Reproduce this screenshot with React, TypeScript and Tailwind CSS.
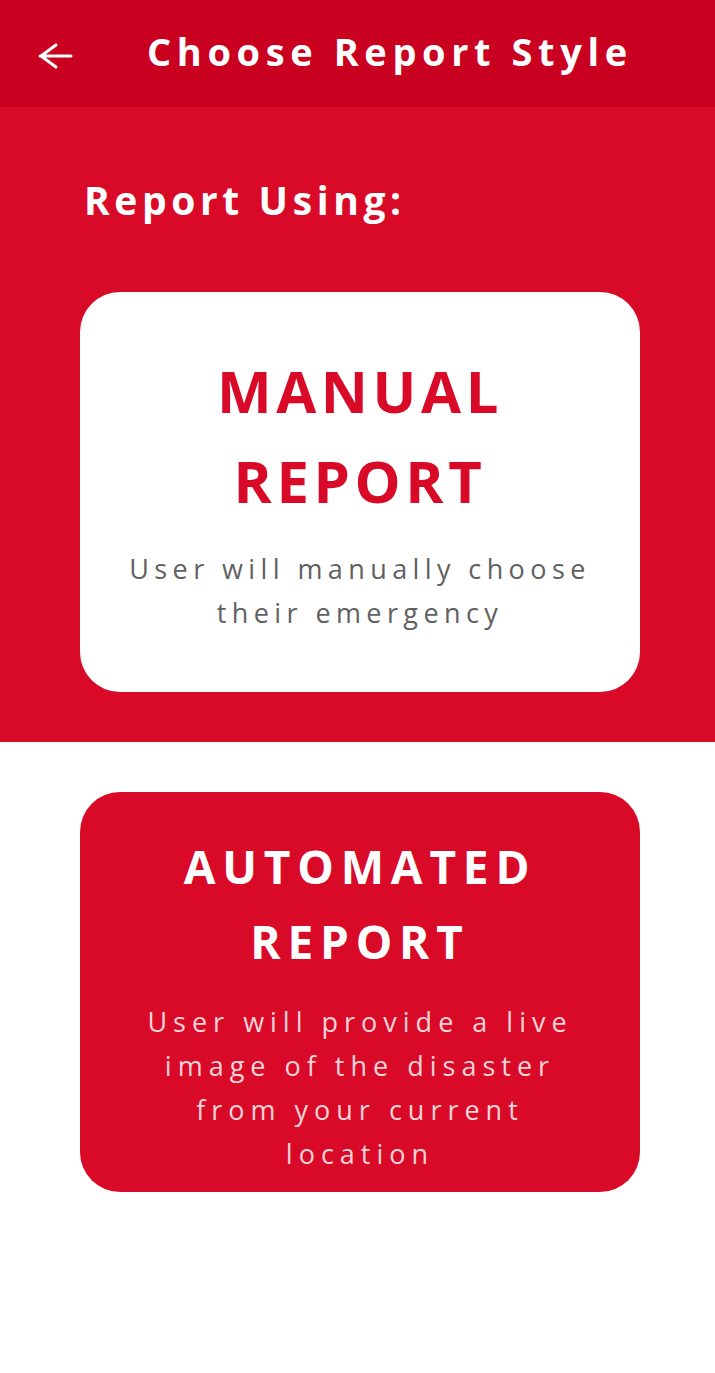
import React from "react";

const font = { fontFamily: '"Open Sans", "Liberation Sans", sans-serif' };

export default function App() {
  return (
    <div className="min-h-[1373px] w-[715px] bg-white" style={font}>
      <header className="flex h-[107px] items-center bg-[#C9001F] pl-[37px]">
        <svg width="36" height="28" viewBox="0 0 36 28" fill="none" className="mt-[5px]">
          <path d="M3 14H34M19 3L4 14l15 11" stroke="white" strokeWidth="3" strokeLinecap="round" strokeLinejoin="round" />
        </svg>
        <h1 className="mb-[6px] ml-[74px] text-[38px] font-bold leading-[48px] tracking-[5.6px] text-white">
          Choose Report Style
        </h1>
      </header>

      <section className="bg-[#D90A27] pb-[50px] pt-[69px]">
        <h2 className="pl-[84px] text-[39px] font-bold leading-[48px] tracking-[4.6px] text-white">
          Report Using:
        </h2>
        <div className="ml-[80px] mt-[68px] flex h-[400px] w-[560px] flex-col items-center rounded-[40px] bg-white pt-[54px] text-center">
          <div className="text-[58px] font-bold leading-[90px] tracking-[4.6px] text-[#D90A27]">
            <div>MANUAL</div>
            <div>REPORT</div>
          </div>
          <div className="mt-[21px] text-[27px] leading-[44px] tracking-[5.4px] text-[#616161]">
            <div>User will manually choose</div>
            <div>their emergency</div>
          </div>
        </div>
      </section>

      <div className="ml-[80px] mt-[50px] flex h-[400px] w-[560px] flex-col items-center rounded-[40px] bg-[#D90A27] pt-[37px] text-center">
        <div className="text-[46px] font-bold leading-[75px] tracking-[6.8px] text-white">
          <div>AUTOMATED</div>
          <div>REPORT</div>
        </div>
        <div className="mt-[21px] text-[27px] leading-[44px] tracking-[6px] text-[#F8D3D8]">
          <div>User will provide a live</div>
          <div>image of the disaster</div>
          <div>from your current</div>
          <div>location</div>
        </div>
      </div>
    </div>
  );
}
